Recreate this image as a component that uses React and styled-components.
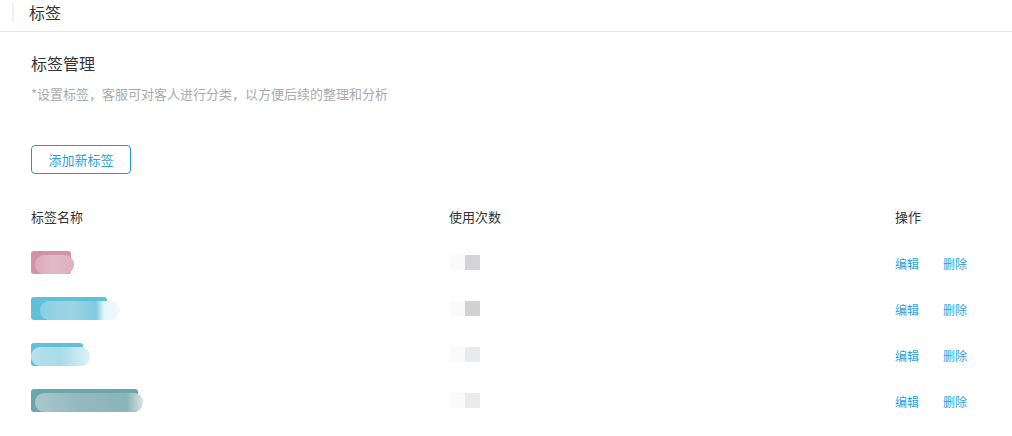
import React from 'react'
import styled, { createGlobalStyle } from 'styled-components'

const GlobalStyle = createGlobalStyle`
  body {
    margin: 0;
    background: #fff;
    font-family: "Noto Sans CJK SC", "Noto Sans", sans-serif;
    color: #333;
  }
`

const tags = [
  { base: '#d492a6', width: 40, smear: 'linear-gradient(90deg, #ddaabb 0%, #e2b9c6 45%, #e0b0c0 100%)', smearLeft: 4, smearWidth: 39 },
  { base: '#5fc0d8', width: 76, smear: 'linear-gradient(90deg, #8ccfe1 0%, #9dd4e4 40%, #80cadf 70%, #e6f5fa 80%, #f2fafd 100%)', smearLeft: 9, smearWidth: 80 },
  { base: '#5fc0d8', width: 52, smear: 'linear-gradient(90deg, #b5e1ec 0%, #a8dbe8 50%, #c3e6ef 75%, #def2f7 100%)', smearLeft: 0, smearWidth: 59 },
  { base: '#6aa6ad', width: 107, smear: 'linear-gradient(90deg, #a8c8cc 0%, #93b9be 40%, #8ab4b9 85%, #d8e6e7 100%)', smearLeft: 4, smearWidth: 108 },
]

const counts = ['#d4d4d6', '#d2d2d5', '#e9eaed', '#ebebeb']

export default function App() {
  return (
    <>
      <GlobalStyle />
      <TopBar>
        <Divider />
        <TopTitle>标签</TopTitle>
      </TopBar>
      <Content>
        <Title>标签管理</Title>
        <Hint>*设置标签，客服可对客人进行分类，以方便后续的整理和分析</Hint>
        <AddButton>添加新标签</AddButton>
        <Table>
          <HeadCell>标签名称</HeadCell>
          <HeadCell>使用次数</HeadCell>
          <HeadCell>操作</HeadCell>
          {tags.map((t, i) => (
            <React.Fragment key={i}>
              <Cell>
                <Tag $base={t.base} style={{ width: t.width }}>
                  <Smear style={{ left: t.smearLeft, width: t.smearWidth, background: t.smear }} />
                </Tag>
              </Cell>
              <Cell>
                <Count>
                  <CountSmear />
                  <CountBox $color={counts[i]} />
                </Count>
              </Cell>
              <Cell>
                <Actions>
                  <LinkText>编辑</LinkText>
                  <LinkText>删除</LinkText>
                </Actions>
              </Cell>
            </React.Fragment>
          ))}
        </Table>
      </Content>
    </>
  )
}

const TopBar = styled.div`
  display: flex;
  align-items: flex-start;
  height: 31px;
  border-bottom: 1px solid #e6e6e6;
`

const Divider = styled.div`
  width: 2px;
  height: 19px;
  margin: 3px 0 0 12px;
  background: #f0f0f0;
`

const TopTitle = styled.div`
  margin-left: 15px;
  font-size: 16px;
  line-height: 25px;
  color: #333;
`

const Content = styled.div`
  padding: 0 31px;
  display: flex;
  flex-direction: column;
  align-items: flex-start;
`

const Title = styled.div`
  margin-top: 19px;
  font-size: 16px;
  line-height: 24px;
  color: #333;
`

const Hint = styled.div`
  margin-top: 9px;
  font-size: 13px;
  line-height: 20px;
  color: #aaa;
`

const AddButton = styled.button`
  margin-top: 41px;
  width: 100px;
  height: 29px;
  padding: 0;
  border: 1px solid #1a9bd7;
  border-radius: 4px;
  background: #fff;
  color: #2a9fdc;
  font-family: inherit;
  font-size: 13px;
  cursor: pointer;
`

const Table = styled.div`
  margin-top: 19px;
  width: 100%;
  display: grid;
  grid-template-columns: 418px 446px 1fr;
  grid-auto-rows: 46px;
`

const HeadCell = styled.div`
  display: flex;
  align-items: center;
  font-size: 13px;
  color: #333;
`

const Cell = styled.div`
  display: flex;
  align-items: center;
`

const Tag = styled.div`
  position: relative;
  height: 23px;
  border-radius: 3px;
  background: ${p => p.$base};
`

const Smear = styled.div`
  position: absolute;
  top: 4px;
  height: 19px;
  border-radius: 9px 9px 9px 9px;
`

const Count = styled.div`
  display: flex;
  margin-left: 1px;
`

const CountSmear = styled.div`
  width: 15px;
  height: 15px;
  background: #fafafa;
`

const CountBox = styled.div`
  width: 15px;
  height: 15px;
  background: ${p => p.$color};
`

const Actions = styled.div`
  display: flex;
  gap: 24px;
  padding-top: 2px;
`

const LinkText = styled.span`
  font-size: 12px;
  color: #2d9fe0;
  cursor: pointer;
`
